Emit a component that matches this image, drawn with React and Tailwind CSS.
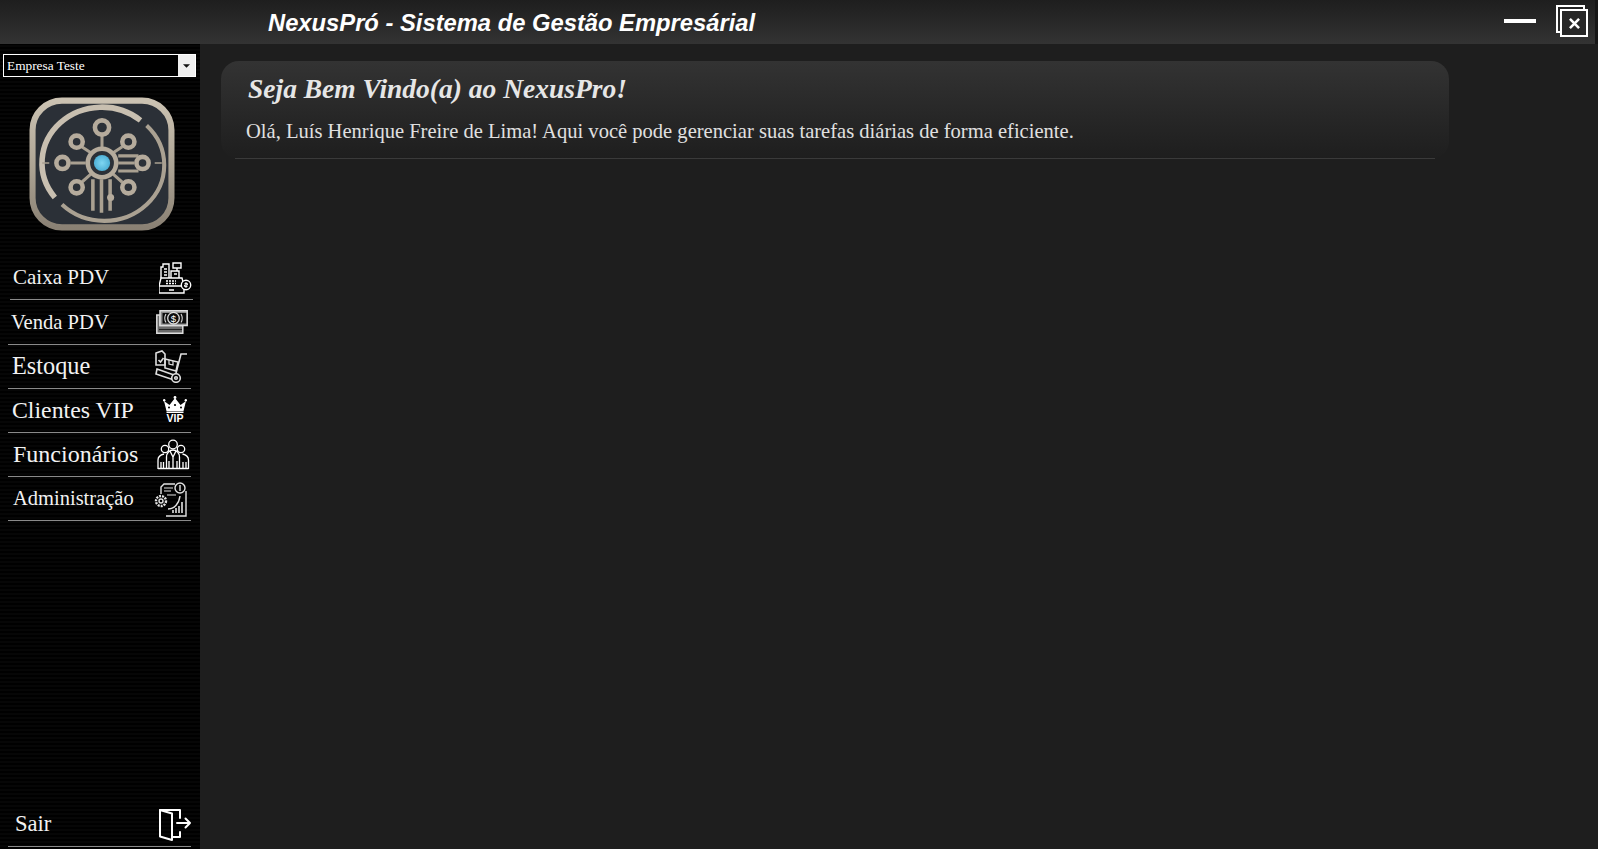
// App.jsx - NexusPro main screen
import React from 'react';

const Logo = () => (
  <svg viewBox="0 0 144 132" className="w-[146px] h-[134px] blur-[0.5px]">
    <defs>
      <linearGradient id="metal" x1="0" y1="0" x2="0" y2="1">
        <stop offset="0" stopColor="#cbc2b2" />
        <stop offset="0.5" stopColor="#aea595" />
        <stop offset="1" stopColor="#8a8174" />
      </linearGradient>
      <radialGradient id="core">
        <stop offset="0" stopColor="#7fd6f2" />
        <stop offset="1" stopColor="#4eb0d6" />
      </radialGradient>
    </defs>
    <rect x="3.5" y="3.5" width="137" height="125" rx="29" fill="#2b3037" stroke="url(#metal)" strokeWidth="6" />
    {/* ring with two cuts, thicker on the upper left */}
    <path d="M110 23 A59 55 0 0 0 25.5 99" fill="none" stroke="#c8bfb0" strokeWidth="5.5" />
    <path d="M116 28 A59 55 0 0 1 32.5 106" fill="none" stroke="#aaa192" strokeWidth="4" />
    <g fill="none" stroke="#a9a091" strokeWidth="3">
      <path d="M72 38V50M52 49L61 55M92 49L83 55M41 65H56M88 58H108M88 65H104M88 73H108M52 84L61 76M92 84L83 76" />
      <path d="M13 65H20M124 65H131" strokeWidth="1.5" />
      <path d="M63 81V112M71.5 81V114M80 81V112" strokeWidth="3.5" />
    </g>
    <g fill="#2b3037" stroke="#b5ab9c" strokeWidth="4.5">
      <circle cx="72" cy="30" r="7" />
      <circle cx="47" cy="44" r="6" />
      <circle cx="98" cy="44" r="6" />
      <circle cx="33" cy="65" r="6" />
      <circle cx="112" cy="65" r="6" />
      <circle cx="47" cy="89" r="6" />
      <circle cx="98" cy="89" r="6" />
      <circle cx="72" cy="65" r="14" strokeWidth="4.5" />
    </g>
    <circle cx="80.5" cy="99" r="3.5" fill="#b5ab9c" />
    <circle cx="72" cy="65" r="8" fill="url(#core)" />
  </svg>
);

const IconCaixa = () => (
  <svg viewBox="0 0 33 33" className="w-[33px] h-[33px]" fill="none" stroke="#fff" strokeWidth="1.4">
    <path d="M2 16V5h2V2h6v14M5 7h3M5 10h3M5 13h3" />
    <path d="M14 1h8v5h-8zM18 6v3M12 16V9h8v7M15 12h3" />
    <path d="M2 16h21l2 8H0zM0 24h25v7H0zM10 28h5" />
    <path d="M7 19h10M7 21.5h10" strokeDasharray="2 1" />
    <circle cx="27" cy="23" r="4.7" fill="#000" />
    <path d="M27 20v6M25.5 21.5h3v1.5h-3v1.5h3" strokeWidth="0.9" />
  </svg>
);

const IconVenda = () => (
  <svg viewBox="0 0 32 24" className="w-[32px] h-[24px]" fill="none" stroke="#dcdcdc" strokeWidth="1.5">
    <path d="M0.8 5v18.2h26V15.5H4V5z" fill="#6a6a6a" />
    <path d="M3 19.5h23" stroke="#222" strokeWidth="1" />
    <path d="M4 0.8h27.2v14.7H4z" fill="#8a8a8a" />
    <path d="M6.5 3h23.7v10.5H6.5z" fill="#0c0c0c" stroke="none" />
    <circle cx="17.5" cy="8.2" r="5.8" fill="#0c0c0c" strokeWidth="1.3" />
    <path d="M10 4c-1.5 2.5-1.5 6 0 8.5M25 4c1.5 2.5 1.5 6 0 8.5" strokeWidth="1.1" />
    <text x="17.5" y="11.5" fontSize="9.5" fontFamily="Liberation Sans" fill="#fff" stroke="none" textAnchor="middle">$</text>
  </svg>
);

const IconEstoque = () => (
  <svg viewBox="0 0 33 33" className="w-[33px] h-[33px]" fill="none" stroke="#dedede" strokeWidth="1.6">
    <path d="M1 3l6-2 3 3v11H1z" />
    <path d="M3.5 10l2 2 3-4" />
    <path d="M10 9l13 3-2 9-11-3z" />
    <path d="M14 10v4l4 1v-4" strokeWidth="1.2" />
    <path d="M32 4h-6l-6 23" />
    <path d="M2 19l17 6-1.5 4.5L1 24z" />
    <circle cx="21" cy="28" r="4.3" fill="#000" />
    <circle cx="21" cy="28" r="1.3" />
  </svg>
);

const IconVip = () => (
  <svg viewBox="0 0 24 28" className="w-[24px] h-[28px]" fill="#fff">
    <path d="M1 5l5.5 4L12 2l5.5 7L23 5l-2.5 10h-17z" />
    <circle cx="1.2" cy="4.2" r="1.2" />
    <circle cx="12" cy="1.5" r="1.4" />
    <circle cx="22.8" cy="4.2" r="1.2" />
    <circle cx="6" cy="11.5" r="1" fill="#000" />
    <circle cx="12" cy="9" r="1.1" fill="#000" />
    <circle cx="18" cy="11.5" r="1" fill="#000" />
    <path d="M3.5 15.5h17V17h-17z" />
    <text x="12" y="26" fontSize="10.5" fontWeight="700" fontFamily="Liberation Sans" textAnchor="middle">VIP</text>
  </svg>
);

const IconFuncionarios = () => (
  <svg viewBox="0 0 33 31" className="w-[33px] h-[31px]" fill="none" stroke="#fff" strokeWidth="1.3">
    <circle cx="16" cy="5.5" r="4.3" />
    <circle cx="8" cy="10" r="3.7" />
    <circle cx="24" cy="10" r="3.7" />
    <path d="M9.5 29V18c0-4 3-7 6.5-7s6.5 3 6.5 7v11" />
    <path d="M13 12l3 6 3-6M16 18v11M12 22v7M20 22v7" />
    <path d="M1 30v-9c0-3 2-5 6-6M31.5 30v-9c0-3-2-5-6-6M4 23v7M6.5 23v7M26 23v7M29 23v7M1 29.5h30.5" />
  </svg>
);

const IconAdmin = () => (
  <svg viewBox="0 0 33 35" className="w-[33px] h-[35px]" fill="none" stroke="#e3e3e3" strokeWidth="1.4">
    <path d="M7 12V5l3-3h11M32 9v25H12" />
    <path d="M10 6h9M10 9h7M13 13h9" strokeWidth="1.1" />
    <circle cx="26" cy="6" r="5" />
    <path d="M26 3v6" />
    <circle cx="7" cy="19" r="5" strokeDasharray="2 1" strokeWidth="2.4" />
    <circle cx="7" cy="19" r="2" />
    <path d="M14 27c6 0 11-5 12-13" />
    <path d="M19 31v-3M22 31v-5M25 31v-7M28 31V20" strokeWidth="1.6" />
  </svg>
);

const IconSair = () => (
  <svg viewBox="0 0 33 32" className="w-[33px] h-[32px]" fill="none" stroke="#fff" strokeWidth="2" strokeLinecap="round" strokeLinejoin="round">
    <path d="M1 1h20v8M21 23v5h-8" />
    <path d="M1 1l12 3.5V31L1 27.5z" />
    <path d="M18 14h13M26.5 9.5L31 14l-4.5 4.5" />
  </svg>
);

const menuItems = [
  { label: 'Caixa PDV', Icon: IconCaixa, text: 'text-[21px] pl-[3px]', row: 'ml-[10px] h-[44px]', icon: 'mr-[1px] mt-[2px]' },
  { label: 'Venda PDV', Icon: IconVenda, text: 'text-[20.6px] pl-[3px]', row: 'ml-[8px] h-[45px]', icon: 'mr-[3px] mt-[-1px]' },
  { label: 'Estoque', Icon: IconEstoque, text: 'text-[24.3px] pl-[4px]', row: 'ml-[8px] h-[44px]', icon: 'mr-[3px]' },
  { label: 'Clientes VIP', Icon: IconVip, text: 'text-[23.8px] pl-[4px]', row: 'ml-[8px] h-[44px]', icon: 'mr-[4px] mt-[-1px]' },
  { label: 'Funcionários', Icon: IconFuncionarios, text: 'text-[24px] pl-[5px] mt-[-2px]', row: 'ml-[8px] h-[44px]', icon: 'mr-[1px] mt-[-1px]' },
  { label: 'Administração', Icon: IconAdmin, text: 'text-[20.5px] pl-[5px]', row: 'ml-[8px] h-[44px]', icon: 'mr-[4px] mt-[2px]' },
];

const MenuRow = ({ label, Icon, text, row, icon }) => (
  <div className={`w-[183px] flex items-center justify-between border-b border-[#8a8a8a] ${row}`}>
    <span className={`text-[#f2f2f2] ${text}`}>{label}</span>
    <span className={`flex items-center ${icon}`}>
      <Icon />
    </span>
  </div>
);

export default function App() {
  return (
    <div className="h-[849px] w-[1598px] overflow-hidden flex flex-col bg-[#1e1e1e] font-['Liberation_Serif',serif]">
      {/* Title bar */}
      <header className="h-[44px] shrink-0 flex items-center bg-gradient-to-b from-[#1e1e1e] to-[#333333] border-r-[3px] border-[#161616]">
        <h1 className="ml-[268px] mt-[2px] text-[23.75px] font-bold italic text-white font-['Liberation_Sans',sans-serif]">
          NexusPró - Sistema de Gestão Empresárial
        </h1>
        <div className="ml-auto flex items-center mr-[7px]">
          <div className="w-[32px] h-[4px] bg-white mr-[20px] mt-[-2px]"></div>
          <div className="relative w-[32px] h-[32px] mt-[-2px]">
            <div className="w-[29px] h-[28px] border-[2px] border-white"></div>
            <div className="absolute left-[4px] top-[4px] w-[28px] h-[28px] border-[2px] border-white bg-[#272727] flex items-center justify-center">
              <svg viewBox="0 0 12 12" className="w-[11px] h-[11px]" stroke="#fff" strokeWidth="2.8">
                <path d="M1 1l10 10M11 1L1 11" />
              </svg>
            </div>
          </div>
        </div>
      </header>

      <div className="flex flex-1 min-h-0">
        {/* Sidebar */}
        <aside className="w-[200px] shrink-0 flex flex-col bg-black bg-[repeating-linear-gradient(0deg,#000_0px,#000_2px,#060606_2px,#060606_4px)]">
          <div className="mt-[10px] ml-[3px] w-[193px] h-[23px] flex border border-white bg-black text-white text-[13.33px]">
            <span className="flex-1 pl-[3px] leading-[22px]">Empresa Teste</span>
            <span className="w-[17px] bg-[#efefef] flex items-center justify-center">
              <svg viewBox="0 0 8 4" className="w-[7px] h-[4px]" fill="#111">
                <path d="M0 0h8L4 4z" />
              </svg>
            </span>
          </div>
          <div className="mt-[20px] ml-[29px] h-[134px]">
            <Logo />
          </div>
          <nav className="mt-[25px]">
            {menuItems.map((item) => (
              <MenuRow key={item.label} {...item} />
            ))}
          </nav>
          <div className="mt-auto ml-[8px] w-[183px] h-[45px] mb-[2px] flex items-center justify-between border-b border-[#8a8a8a]">
            <span className="pl-[7px] text-[22.6px] text-[#f2f2f2]">Sair</span>
            <span className="mr-[-1px] mt-[2px]">
              <IconSair />
            </span>
          </div>
        </aside>

        {/* Content */}
        <main className="flex-1 min-w-0 pt-[17px] pl-[21px]">
          <section className="relative w-[1228px] h-[98px] rounded-[18px] bg-gradient-to-b from-[#333333] to-[#1e1e1e] pl-[21px]">
            <h2 className="pt-[13px] pl-[6px] text-[27.5px] leading-[30px] font-bold italic text-[#e6e6e6]">
              Seja Bem Vindo(a) ao NexusPro!
            </h2>
            <p className="mt-[16px] pl-[4px] text-[20.55px] leading-[23px] text-[#e0e0e0]">
              Olá, Luís Henrique Freire de Lima! Aqui você pode gerenciar suas tarefas diárias de forma eficiente.
            </p>
            <div className="absolute left-[14px] right-[14px] bottom-0 h-px bg-[#3a3a3a]"></div>
          </section>
        </main>
      </div>
    </div>
  );
}
